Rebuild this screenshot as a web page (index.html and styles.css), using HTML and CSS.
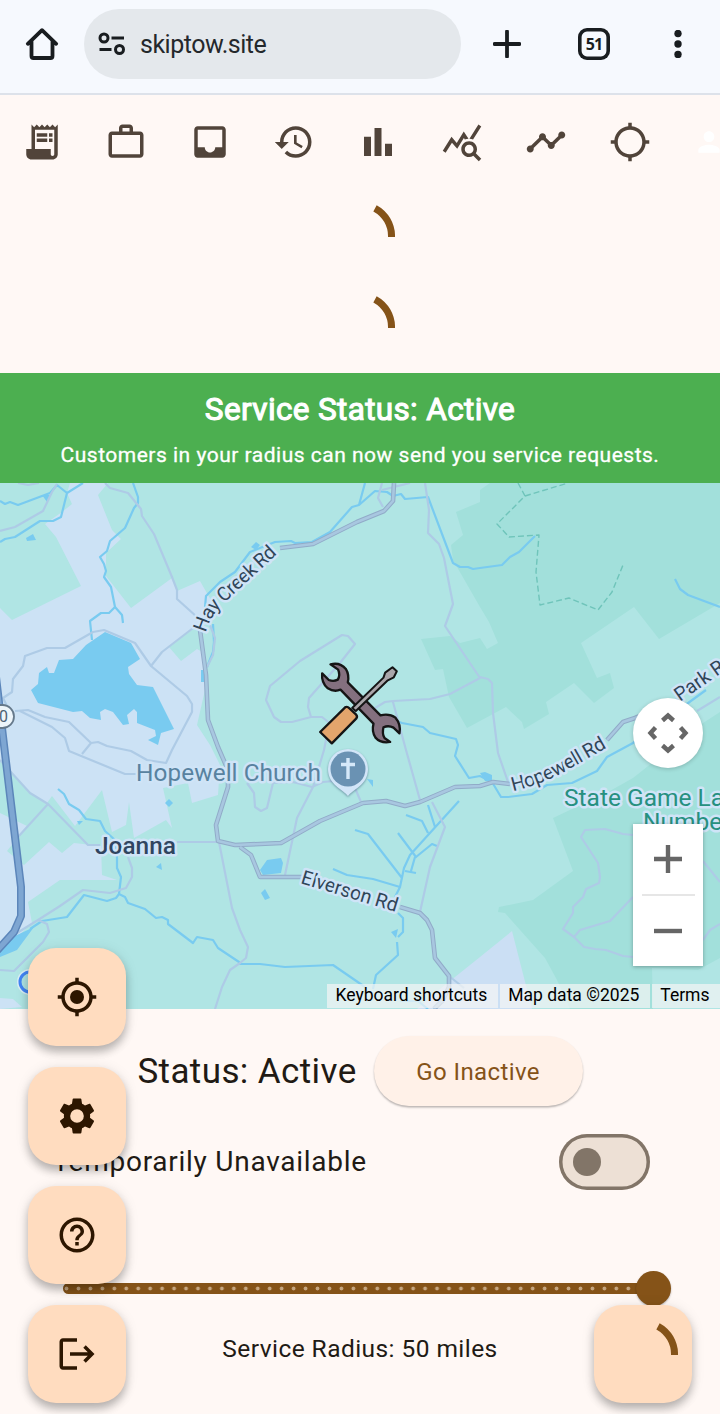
FILE: index.html
```
<!DOCTYPE html>
<html lang="en">
<head>
<meta charset="utf-8">
<meta name="viewport" content="width=device-width, initial-scale=1">
<title>SkipTow</title>
<link rel="stylesheet" href="styles.css">
</head>
<body>
<div class="app">
  <header class="browser">
    <svg class="home" viewBox="0 0 34 34"><path d="M2.800 16.800 17 3.200l14.200 13.600M6.500 14.500V29a2 2 0 0 0 2 2h17a2 2 0 0 0 2-2V14.500"/></svg>
    <div class="address">
      <svg class="tune" viewBox="0 0 28 24"><circle cx="6" cy="6" r="4"/><circle cx="21.500" cy="17.500" r="4"/><path d="M13.500 6H26M1.500 17.500h12"/></svg>
      <span>skiptow.site</span>
    </div>
    <svg class="plus" viewBox="0 0 28 28"><path d="M14 1.500v25M1.500 14h25"/></svg>
    <div class="tabs">51</div>
    <svg class="dots" viewBox="0 0 8 28"><circle cx="4" cy="3.500" r="3.700"/><circle cx="4" cy="14" r="3.700"/><circle cx="4" cy="24.500" r="3.700"/></svg>
  </header>

  <nav class="nav">
    <a class="nav-item"><svg class="icon" viewBox="0 0 24 24"><path d="M19.500 3.500 18 2l-1.500 1.500L15 2l-1.500 1.500L12 2l-1.500 1.500L9 2 7.500 3.500 6 2v14H3v3c0 1.660 1.340 3 3 3h12c1.660 0 3-1.340 3-3V2l-1.500 1.500zM19 19c0 .55-.45 1-1 1s-1-.45-1-1v-3H8V5h11v14z"/><path d="M9 7h6v2H9zM16 7h2v2h-2zM9 10h6v2H9zM16 10h2v2h-2z"/></svg></a>
    <a class="nav-item"><svg class="icon" viewBox="0 0 24 24"><path d="M14 6V4h-4v2h4zM4 8v11h16V8H4zm16-2c1.110 0 2 .89 2 2v11c0 1.110-.89 2-2 2H4c-1.110 0-2-.89-2-2l.01-11c0-1.110.88-2 1.990-2h4V4c0-1.110.89-2 2-2h4c1.110 0 2 .89 2 2v2h4z"/></svg></a>
    <a class="nav-item"><svg class="icon" viewBox="0 0 24 24"><path d="M19 3H4.990c-1.110 0-1.980.89-1.980 2L3 19c0 1.100.88 2 1.990 2H19c1.100 0 2-.9 2-2V5c0-1.110-.9-2-2-2zm0 12h-4c0 1.660-1.350 3-3 3s-3-1.340-3-3H4.990V5H19v10z"/></svg></a>
    <a class="nav-item"><svg class="icon" viewBox="0 0 24 24"><path d="M13 3c-4.970 0-9 4.030-9 9H1l3.890 3.890.07.14L9 12H6c0-3.870 3.130-7 7-7s7 3.130 7 7-3.130 7-7 7c-1.930 0-3.680-.79-4.940-2.060l-1.420 1.420C8.270 19.990 10.510 21 13 21c4.970 0 9-4.030 9-9s-4.030-9-9-9zm-1 5v5l4.280 2.540.72-1.210-3.500-2.080V8H12z"/></svg></a>
    <a class="nav-item"><svg class="icon" viewBox="0 0 24 24"><path d="M4 9h4v11H4zM16 13h4v7h-4zM10 4h4v16h-4z"/></svg></a>
    <a class="nav-item"><svg class="icon" viewBox="0 0 24 24"><path d="M19.880 18.470c.44-.7.7-1.510.7-2.390 0-2.490-2.010-4.500-4.500-4.500s-4.500 2.010-4.500 4.500 2.010 4.500 4.490 4.500c.88 0 1.700-.26 2.390-.7L21.580 23 23 21.580l-3.120-3.110zm-3.800.11c-1.380 0-2.500-1.120-2.500-2.500s1.120-2.500 2.500-2.500 2.500 1.120 2.500 2.500-1.120 2.500-2.500 2.500zm-.36-8.500c-.74.02-1.450.18-2.100.45l-.55-.83-3.800 6.180-3.010-3.520-3.630 5.810L1 17l5-8 3 3.500L13 6l2.720 4.080zm2.590.5c-.64-.28-1.330-.45-2.050-.49L21.380 2 23 3.180l-4.690 7.400z"/></svg></a>
    <a class="nav-item"><svg class="icon" viewBox="0 0 24 24"><path d="M23 8c0 1.100-.9 2-2 2-.18 0-.35-.02-.51-.07l-3.560 3.550c.05.16.07.34.07.52 0 1.100-.9 2-2 2s-2-.9-2-2c0-.18.02-.36.07-.52l-2.550-2.550c-.16.05-.34.07-.52.07s-.36-.02-.52-.07l-4.550 4.560c.05.16.07.33.07.51 0 1.100-.9 2-2 2s-2-.9-2-2 .9-2 2-2c.18 0 .35.02.51.07l4.560-4.550C8.020 9.360 8 9.180 8 9c0-1.100.9-2 2-2s2 .9 2 2c0 .18-.02.36-.07.52l2.550 2.550c.16-.05.34-.07.52-.07s.36.02.52.07l3.550-3.560C19.020 8.350 19 8.180 19 8c0-1.100.9-2 2-2s2 .9 2 2z"/></svg></a>
    <a class="nav-item"><svg class="icon" viewBox="0 0 24 24"><path d="M20.940 11c-.46-4.170-3.770-7.480-7.940-7.940V1h-2v2.060C6.830 3.520 3.520 6.830 3.060 11H1v2h2.060c.46 4.170 3.770 7.480 7.940 7.940V23h2v-2.060c4.170-.46 7.480-3.770 7.940-7.940H23v-2h-2.060zM12 19c-3.870 0-7-3.130-7-7s3.130-7 7-7 7 3.130 7 7-3.130 7-7 7z"/></svg></a>
    <a class="nav-item nav-profile"><svg viewBox="0 0 24 24"><path d="M12 12c2.210 0 4-1.790 4-4s-1.790-4-4-4-4 1.790-4 4 1.790 4 4 4zm0 2c-2.670 0-8 1.340-8 4v2h16v-2c0-2.660-5.330-4-8-4z"/></svg></a>
  </nav>

  <section class="loaders">
    <svg class="spinner" viewBox="0 0 70 70"><path d="M50 7.300A31.500 31.500 0 0 1 66.500 36"/></svg>
    <svg class="spinner" viewBox="0 0 70 70"><path d="M50 7.300A31.500 31.500 0 0 1 66.500 36"/></svg>
  </section>

  <section class="banner">
    <h1>Service Status: Active</h1>
    <p>Customers in your radius can now send you service requests.</p>
  </section>

  <section class="map">
    <svg class="map-canvas" viewBox="0 483 720 526">
      <defs>
        <path id="hay" d="M206 633Q209 618 222 605L288 544"/>
        <path id="hopewell" d="M513 791Q540 785 566 771L620 740"/>
        <path id="elverson" d="M300 883L409 916"/>
        <path id="park" d="M680 702L740 660"/>
      </defs>
      <rect class="land" y="483" width="720" height="526"/>
      <g class="urban">
        <path d="M57 483H108L98 495 112 530 121 539 106 553 106 576 131 608 172 578 177 591 200 581 212 602 205 630 205 690 197 725 210 745 220 765 218 795 192 803 188 783 163 788 172 828 166 820 134 838 129 802 126 825 112 832 102 790 75 826 52 796 47 803 30 793 10 772 0 760V608L12 620 81 586 56 537 45 524 62 512 72 504 67 493 70 483Z"/>
        <path d="M0 813 27 826 7 851 24 865 49 842 62 853 74 843 101 846 102 875 117 880H60L28 902 32 923 0 953ZM0 998 13 999 22 1007 0 1009Z"/>
        <path class="urban-2" d="M512 931 480 957 440 989 417 1009H532Z"/>
      </g>
      <path class="land" d="M169 647 181 661 197 649 208 655V624L197 626Z"/>
      <g class="forest">
        <path d="M490 483H720V603L659 639 634 607 581 643 597 678 610 673 614 688 594 703 574 683 546 702 549 714 524 729 522 722 506 707 467 728 449 697 443 669 435 670 421 639 450 636 460 643 480 638 487 649 498 643 489 622 480 607 453 560 451 545 463 535 456 512 480 502V490Z"/>
        <path d="M553 818 608 792 633 778 700 725 720 712V958L698 970 652 968 653 1009H570L557 980 545 958 505 913 498 912 499 907 533 900 573 871Z"/>
      </g>
      <g class="water">
        <path d="M105 632 131 643 140 659 128 667 129 674 137 685 153 687 174 729 161 733 158 745 148 740 156 736 155 730 137 723V712L134 709 127 715 129 724 123 725 113 712 105 709 100 712 101 720 90 718 82 711 73 712 38 703 31 690 38 684 39 673 47 667 49 673H54L59 660 73 659 86 645Z"/>
        <path d="M260 870 267 860 281 858 283 863 281 873 263 875ZM261 893 265 889 270 898 265 900ZM34 927 17 950 0 957V943ZM480 773 485 772 492 775V782L485 781ZM26 538 33 534 36 540 27 541ZM42 495 51 495 47 502ZM165 803 169 799 173 803 169 807ZM77 821 83 821 79 825ZM156 867 161 863 162 870ZM367 779 373 780V787ZM391 932 398 929 396 938ZM251 547 256 542 260 545 256 550ZM201 670H205V682H201Z"/>
      </g>
      <g class="stream">
        <path d="M0 501 5 504 10 502 18 505 50 493 57 485 67 493 61 517 53 521H40L15 537 5 539 0 542M67 493 83 483"/>
        <path d="M133 483 138 497V503L134 508 125 528 110 541 107 551 100 557 104 564 106 571 104 577 111 587 115 607 122 615 123 623M115 607 109 613H101L90 621 92 640"/>
        <path d="M205 607 206 596 220 582 235 572 250 552 275 542 291 541 295 543 312 542 330 532 352 507 359 505 375 491 387 492 393 496 401 494 405 499 428 497 453 563 460 567H468L473 569 480 568 502 565 510 557 519 552 535 536M365 483 359 505M213 624 214 642 213 652 207 667"/>
        <path d="M675 579 680 589 688 595 720 607M375 713 402 723 423 727 430 733 456 739 458 745 455 756 469 778 480 776 492 782 501 797 508 797 532 794 547 785 572 783 597 771 607 757 633 743 706 690"/>
        <path d="M58 789 64 794 69 804 79 810 86 819 100 821 105 831 115 840 117 858V868L121 877 119 894 116 898 107 901 84 895 67 917 42 921 30 929M119 894 125 897 128 903 145 909 156 918 162 917 168 920V924L193 943 197 937 213 940 218 948 239 962 240 964H260L285 967 333 965 365 987M373 989 376 975 398 955 397 942M398 937 403 932V918L398 913M395 897 400 887 404 868 410 855 429 834 459 801M355 830 368 834 402 878M333 869 347 875 373 879 400 887M406 815 422 821 428 833M428 805 435 827M398 833 416 857 432 844 437 846M415 857 411 871M405 871 416 873M400 1001 418 1001 428 1009"/>
      </g>
      <g class="trail"><path d="M518 483 525 496 497 524 509 537 539 535 536 572 540 605 569 598 598 610 612 592 623 565M525 496 568 483"/></g>
      <g class="street">
        <path d="M0 531 15 527 43 511 52 492 57 484M18 483 28 485 39 483M105 483 110 488 128 493 141 509 142 516 154 534 172 577 177 590V599L197 617M197 625 162 652 151 666 135 643 104 630 93 632 65 648H47L25 656 23 666 13 679 12 692 3 698 8 708"/>
        <path d="M151 666 187 696 192 704V712L172 750 166 763 147 760 131 751 107 746 98 742 91 743 69 722 45 717 28 710 15 711M20 711 52 727 65 738 69 751 125 774H137M91 743 82 754M210 625 215 638 213 655 207 667"/>
        <path d="M340 663 355 644 348 636 342 635 300 661 270 686 266 700 274 717 281 722H292L311 717H322L332 725M311 717 308 707 309 698 340 663M425 483 429 510 428 533 439 544 444 558 453 604 445 626 480 678 450 694 430 699 393 701 385 702 375 708M393 702 406 750 420 800M480 677 488 679 492 683 493 713 498 753 508 782M382 483 378 498 383 507M382 490 410 483"/>
        <path d="M328 730 324 750 313 787 297 818 285 875M247 783 254 793 255 807 261 811 267 808 273 783 293 782 312 787 323 782 345 780 355 788 361 802M432 802 445 827 430 867 420 912M218 842H177M0 760 30 793 48 804 88 845H100M48 804 18 837M128 857 132 868V877L126 888 110 893 83 890 60 906 38 920 17 933M38 920 47 924 49 932 43 942 14 971 0 970M219 842 232 908 240 930 248 947 246 958 240 963 230 970 222 987 215 1009"/>
        <path d="M633 835 623 834 605 829 585 830 581 837 598 863 600 877 599 883 586 889 583 897 573 907V913L563 929 574 937 584 947 595 949 606 950 623 956 633 957M574 937 580 930 610 921 633 897M703 861 720 882M703 940 710 930 720 924M697 711 720 697M449 976 464 988"/>
      </g>
      <g class="road-edge">
        <path d="M200 630 206 675 208 720 218 747 228 770V787L216 825 218 841 235 845 260 844 281 843 320 821 363 803 386 801 405 806 420 802 455 787 480 786 493 782 510 784M240 847 251 855 260 877H302M400 907 420 913 427 920 432 930 435 958 449 976V987L443 1000 434 1009M280 548 313 544 357 522 384 511 393 501 394 483M607 740 623 722 635 718 660 708"/>
      </g>
      <g class="road">
        <path d="M200 630 206 675 208 720 218 747 228 770V787L216 825 218 841 235 845 260 844 281 843 320 821 363 803 386 801 405 806 420 802 455 787 480 786 493 782 510 784M240 847 251 855 260 877H302M400 907 420 913 427 920 432 930 435 958 449 976V987L443 1000 434 1009M280 548 313 544 357 522 384 511 393 501 394 483M607 740 623 722 635 718 660 708"/>
      </g>
      <path class="highway-edge" d="M-6 660 4 745 21 887V916L14 932 -6 954"/>
      <path class="highway" d="M-6 660 4 745 21 887V916L14 932 -6 954"/>

      <rect class="shield" x="-18" y="705" width="32" height="23" rx="11.500"/>
      <text class="shield-text" x="-1" y="722">0</text>

      <g class="road-name">
        <text textLength="108"><textPath href="#hay">Hay Creek Rd</textPath></text>
        <text textLength="104"><textPath href="#hopewell">Hopewell Rd</textPath></text>
        <text textLength="100"><textPath href="#elverson">Elverson Rd</textPath></text>
        <text><textPath href="#park">Park Rd</textPath></text>
      </g>
      <text class="place poi" x="136" y="781" textLength="185">Hopewell Church</text>
      <text class="place town" x="95" y="854" textLength="81">Joanna</text>
      <text class="place park" x="564" y="805.500">State Game Lands</text>
      <text class="place park" x="643" y="830">Number 43</text>

      <path class="pin" d="M348 796C344 790 328 785 328 769A20 20 0 0 1 368 769C368 785 352 790 348 796Z"/>
      <circle class="pin-face" cx="348" cy="769" r="17.500"/>
      <path class="cross" d="M348 758V779M341 764.500H355"/>

      <g class="tools" transform="translate(239.500 480) scale(.3333)">
        <path class="wrench" d="M273 553Q302 546 319 567Q330 585 325 607L423 706Q450 700 468 713Q485 733 480 760L462 743Q447 735 432 742Q427 762 435 774L452 786Q424 791 408 773Q396 755 402 731L303 629Q284 637 265 625Q245 608 248 580L268 600Q282 606 295 599Q303 584 296 569Z"/>
        <path class="driver-shaft" d="M338 684 432 593 437 578 459 562 472 574 463 592 445 601 349 693Z"/>
        <path class="driver-handle" d="M242 756 317 682Q323 678 330 685L350 704Q355 710 350 716L277 790Z"/>
      </g>
      <circle class="here-halo" cx="30" cy="982" r="13"/>
      <circle class="here" cx="30" cy="982" r="10"/>
    </svg>

    <button class="pan" aria-label="Map camera controls">
      <svg viewBox="0 0 42 42"><path d="M15.500 8.500 21 3.500l5.500 5M15.500 33.500l5.500 5 5.500-5M8.500 15.500 3.500 21l5 5.500M33.500 15.500l5 5.500-5 5.500"/></svg>
    </button>
    <div class="zoom">
      <svg viewBox="0 0 30 30"><path d="M15 1v28M1 15h28"/></svg>
      <i class="zoom-rule"></i>
      <svg viewBox="0 0 30 30"><path d="M1 15h28"/></svg>
    </div>
    <div class="legal"><span>Keyboard shortcuts</span><span>Map data ©2025</span><span>Terms</span></div>
  </section>

  <main class="panel">
    <div class="status">
      <h2>Status: Active</h2>
      <button class="inactive">Go Inactive</button>
    </div>
    <div class="availability">
      <span>Temporarily Unavailable</span>
      <div class="switch"><i></i></div>
    </div>
    <div class="slider"><div class="track"></div><div class="thumb"></div></div>
    <p class="radius">Service Radius: 50 miles</p>
  </main>

  <aside class="fabs">
    <button class="fab"><svg class="icon" viewBox="0 0 24 24"><circle cx="12" cy="12" r="4"/><path d="M20.940 11c-.46-4.170-3.770-7.480-7.940-7.940V1h-2v2.060C6.830 3.520 3.520 6.830 3.060 11H1v2h2.060c.46 4.170 3.770 7.480 7.940 7.940V23h2v-2.060c4.170-.46 7.480-3.770 7.940-7.940H23v-2h-2.060zM12 19c-3.870 0-7-3.130-7-7s3.130-7 7-7 7 3.130 7 7-3.130 7-7 7z"/></svg></button>
    <button class="fab"><svg class="icon" viewBox="0 0 24 24"><path d="M19.430 12.980c.04-.32.07-.64.07-.98s-.03-.66-.07-.98l2.110-1.650c.19-.15.24-.42.12-.64l-2-3.460c-.12-.22-.39-.3-.61-.22l-2.490 1c-.52-.4-1.080-.73-1.690-.98l-.38-2.650C14.460 2.180 14.250 2 14 2h-4c-.25 0-.46.18-.49.42l-.38 2.650c-.61.25-1.170.59-1.690.98l-2.490-1c-.23-.09-.49 0-.61.22l-2 3.460c-.13.22-.07.49.12.64l2.110 1.650c-.04.32-.07.65-.07.98s.03.66.07.98l-2.110 1.650c-.19.15-.24.42-.12.64l2 3.460c.12.22.39.3.61.22l2.490-1c.52.4 1.080.73 1.690.98l.38 2.650c.03.24.24.42.49.42h4c.25 0 .46-.18.49-.42l.38-2.650c.61-.25 1.170-.59 1.690-.98l2.490 1c.23.09.49 0 .61-.22l2-3.460c.12-.22.07-.49-.12-.64l-2.110-1.650zM12 15.900a3.900 3.900 0 1 1 0-7.800 3.900 3.900 0 0 1 0 7.800z"/></svg></button>
    <button class="fab"><svg class="icon" viewBox="0 0 24 24"><path d="M11 18h2v-2h-2v2zm1-16C6.480 2 2 6.480 2 12s4.480 10 10 10 10-4.480 10-10S17.520 2 12 2zm0 18c-4.410 0-8-3.590-8-8s3.590-8 8-8 8 3.590 8 8-3.590 8-8 8zm0-14c-2.210 0-4 1.790-4 4h2c0-1.100.9-2 2-2s2 .9 2 2c0 2-3 1.750-3 5h2c0-2.250 3-2.500 3-5 0-2.210-1.790-4-4-4z"/></svg></button>
    <button class="fab"><svg class="icon" viewBox="0 0 24 24"><path d="M17 7l-1.410 1.410L18.170 11H8v2h10.170l-2.580 2.580L17 17l5-5zM4 5h8V3H4c-1.100 0-2 .9-2 2v14c0 1.100.9 2 2 2h8v-2H4V5z"/></svg></button>
  </aside>
  <button class="fab fab-busy"><svg class="spinner" viewBox="0 0 70 70"><path d="M50 7.300A31.500 31.500 0 0 1 66.500 36"/></svg></button>
</div>
</body>
</html>
```
FILE: styles.css
```
* { box-sizing: border-box; }
body { margin: 0; font-family: Roboto, "Liberation Sans", sans-serif; background: #fff8f5; }
h1, h2, p { margin: 0; font-weight: 400; }
button { border: 0; padding: 0; font: inherit; }
svg { display: block; flex: none; }

.app { position: relative; width: 720px; height: 1414px; overflow: hidden; color: #211a14; }

.browser { display: flex; align-items: center; height: 95px; padding: 0 0 5px 25px; background: #f6f9fe; border-bottom: 2px solid #dde2ea; }
.browser svg { fill: none; stroke: #191d20; stroke-width: 3.800; stroke-linecap: round; stroke-linejoin: round; }
.browser .home { width: 34px; height: 34px; }
.address { display: flex; align-items: center; gap: 14px; width: 377px; height: 70px; margin-left: 25px; padding-left: 14px; border-radius: 35px; background: #e4e8ec; font-size: 25px; letter-spacing: -.5px; color: #24282c; }
.browser .tune { width: 28px; height: 24px; stroke-width: 3; stroke-linecap: butt; }
.browser .plus { width: 28px; height: 28px; margin-left: 32px; }
.tabs { display: flex; align-items: center; justify-content: center; width: 32px; height: 32px; margin-left: 57px; border-radius: 9px; box-shadow: inset 0 0 0 3.600px #191d20; font: 700 16px "Open Sans", sans-serif; letter-spacing: -1px; color: #191d20; }
.browser .dots { width: 8px; height: 28px; margin-left: 64px; fill: #191d20; stroke: none; }

.nav { display: flex; height: 94px; }
.nav-item { display: flex; flex: none; align-items: center; justify-content: center; width: 84px; color: #51443a; }
.icon { width: 42px; height: 42px; fill: currentColor; }
.nav-profile { width: 73px; color: #fff; }
.nav-profile svg { width: 32px; height: 32px; fill: currentColor; }

.loaders { display: flex; flex-direction: column; align-items: center; gap: 21px; height: 184px; padding-top: 12px; }
.spinner { width: 70px; height: 70px; fill: none; stroke: #855318; stroke-width: 7; }

.banner { height: 110px; padding-top: 16px; background: #4caf50; color: #fff; text-align: center; }
.banner h1 { font-size: 31.500px; line-height: 41px; font-weight: 400; letter-spacing: .35px; -webkit-text-stroke: 1.100px #fff; }
.banner p { margin-top: 10px; font-size: 21px; line-height: 30px; letter-spacing: .5px; white-space: nowrap; -webkit-text-stroke: .3px #fff; }

.map { position: relative; height: 526px; overflow: hidden; }
.map-canvas { width: 720px; height: 526px; }
.land { fill: #b0e5e4; }
.urban { fill: #cce2f5; }
.urban-2 { fill: #cbdff4; }
.forest { fill: #a2e0db; }
.water { fill: #79cbf0; }
.stream, .street, .road, .road-edge, .trail { fill: none; stroke-linejoin: round; }
.stream { stroke: #79cbf0; stroke-width: 2.200; }
.trail { stroke: #6fc4ba; stroke-width: 1.400; stroke-dasharray: 6 3; }
.street { stroke: #aecbe6; stroke-width: 2.200; }
.road-edge { stroke: #91abc8; stroke-width: 4.600; }
.road { stroke: #a8c7e0; stroke-width: 2.600; }
.highway-edge, .highway { fill: none; stroke: #5c86ba; stroke-width: 8; stroke-linejoin: round; }
.highway { stroke: #7ea6d2; stroke-width: 5; }
.shield { fill: #edf5fa; stroke: #65798b; stroke-width: 1.800; }
.shield-text { font-size: 16px; fill: #4e6274; }
.road-name { font-size: 19.500px; fill: #304558; }
.road-name text, .place { stroke: #cfe4f7; stroke-width: 5; stroke-linejoin: round; paint-order: stroke; }
.place { font-size: 24.500px; }
.poi { fill: #5882a0; }
.town { font-weight: 500; fill: #304560; }
.park { fill: #269080; }
.pin { fill: #d2e5f8; filter: drop-shadow(0 1px 1px rgba(40, 70, 100, .5)); }
.pin-face { fill: #6a92b3; }
.cross { fill: none; stroke: #d5e8f9; stroke-width: 3.400; }
.tools path { stroke: #151515; stroke-width: 7; stroke-linejoin: round; }
.wrench { fill: #84707f; }
.tools .driver-shaft { fill: #aaa6aa; stroke-width: 6; }
.driver-handle { fill: #e3a56c; }
.here-halo { fill: #d9eef5; }
.here { fill: #b0e5e4; stroke: #4285f4; stroke-width: 3; }

.pan { position: absolute; left: 633px; top: 215px; display: flex; align-items: center; justify-content: center; width: 70px; height: 70px; border-radius: 50%; background: #fff; box-shadow: 0 1px 4px rgba(0, 0, 0, .2); }
.pan svg { width: 42px; height: 42px; }
.pan svg, .zoom svg { fill: none; stroke: #666; stroke-width: 4.400; }
.zoom { position: absolute; left: 633px; top: 341px; display: flex; flex-direction: column; align-items: center; justify-content: space-between; width: 70px; height: 142px; padding: 20px 0; background: #fff; box-shadow: 0 1px 4px rgba(0, 0, 0, .3); }
.zoom svg { width: 30px; height: 30px; }
.zoom-rule { width: 53px; height: 2px; background: #e6e6e6; }
.legal { position: absolute; right: 0; bottom: 1px; display: flex; gap: 2px; height: 24px; font-size: 17.500px; line-height: 22px; color: #000; white-space: nowrap; }
.legal span { padding: 0 10.500px 0 8.500px; background: rgba(245, 245, 245, .7); }

.panel { display: flex; flex-direction: column; height: 405px; padding: 27px 56px 0; }
.status { display: flex; align-items: center; justify-content: center; gap: 17px; height: 70px; }
.status h2 { font-size: 35px; letter-spacing: .4px; }
.inactive { width: 209px; height: 70px; padding-top: 1px; border-radius: 35px; background: #fff1e8; box-shadow: 0 1.500px 2px rgba(0, 0, 0, .28); color: #855318; font-size: 24px; letter-spacing: .4px; }
.availability { display: flex; align-items: center; justify-content: space-between; height: 56px; margin: 28px 0 0 -3.500px; padding-right: 14px; font-size: 28px; letter-spacing: .74px; }
.availability span { margin-top: -2px; }
.switch { display: flex; align-items: center; width: 91px; height: 56px; padding-left: 14px; box-shadow: inset 0 0 0 3.500px #827568; border-radius: 28px; background: #ede0d5; }
.switch i { width: 28px; height: 28px; border-radius: 50%; background: #827568; }
.slider { display: flex; align-items: center; height: 36px; margin: 80px -7px 0 7px; }
.track { width: 590px; height: 11px; margin-right: -17px; border-radius: 6px 0 0 6px; background: radial-gradient(circle at 3.500px 5.500px, #c6a680 1.500px, transparent 2.300px) 0 0 / 11.960px 11px, #855318; }
.thumb { width: 35px; height: 35px; border-radius: 50%; background: #855318; box-shadow: 0 1px 2px rgba(0, 0, 0, .3); }
.radius { margin-top: 25px; text-align: center; font-size: 24.500px; line-height: 35px; letter-spacing: .44px; }

.fabs { position: absolute; left: 28px; top: 948px; display: flex; flex-direction: column; gap: 21px; }
.fab { display: flex; align-items: center; justify-content: center; width: 98px; height: 98px; border-radius: 28px; background: #ffdcbf; box-shadow: 0 6px 8px rgba(0, 0, 0, .24), 0 2px 14px rgba(0, 0, 0, .1); color: #2d1600; }
.fab-busy { position: absolute; left: 594px; top: 1305px; }
```
